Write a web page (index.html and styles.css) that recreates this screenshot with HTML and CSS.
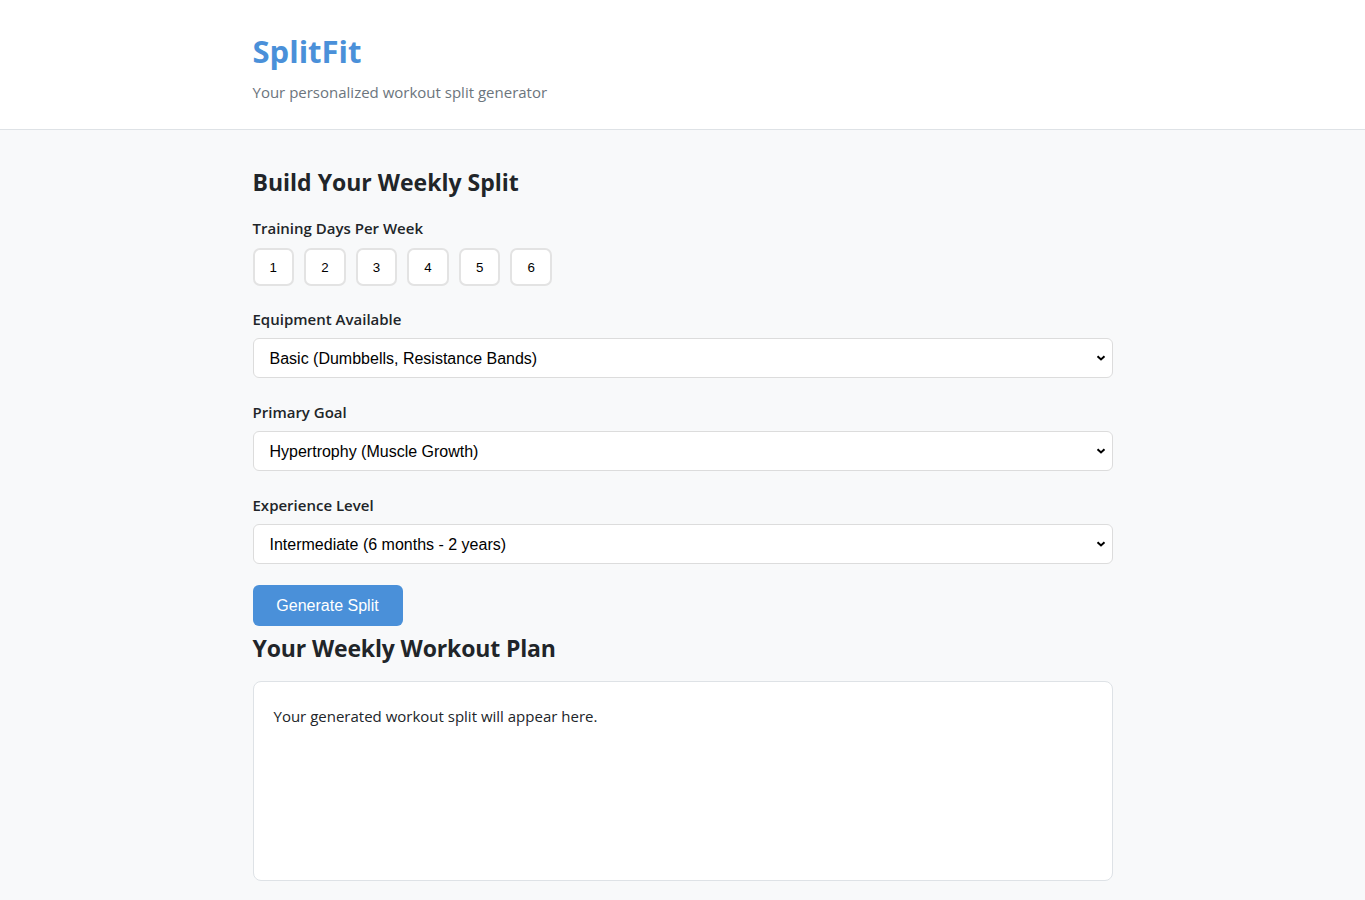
FILE: index.html
```html
<!DOCTYPE html>
<html lang="en">
<head>
<meta charset="utf-8">
<title>SplitFit</title>
<link rel="stylesheet" href="styles.css">
</head>
<body>
<header class="site-header">
  <div class="container">
    <h1 class="logo">SplitFit</h1>
    <p class="tagline">Your personalized workout split generator</p>
  </div>
</header>
<main class="main">
  <div class="container">
    <h2 class="section-title">Build Your Weekly Split</h2>
    <div class="field field-days">
      <label class="field-label days-label">Training Days Per Week</label>
      <div class="days">
        <button class="day-btn">1</button>
        <button class="day-btn">2</button>
        <button class="day-btn">3</button>
        <button class="day-btn">4</button>
        <button class="day-btn">5</button>
        <button class="day-btn">6</button>
      </div>
    </div>
    <div class="field">
      <label class="field-label" for="equipment">Equipment Available</label>
      <select id="equipment" class="select">
        <option>Basic (Dumbbells, Resistance Bands)</option>
      </select>
    </div>
    <div class="field">
      <label class="field-label" for="goal">Primary Goal</label>
      <select id="goal" class="select">
        <option>Hypertrophy (Muscle Growth)</option>
      </select>
    </div>
    <div class="field">
      <label class="field-label" for="exp">Experience Level</label>
      <select id="exp" class="select">
        <option>Intermediate (6 months - 2 years)</option>
      </select>
    </div>
    <button class="generate-btn">Generate Split</button>
    <h2 class="section-title plan-title">Your Weekly Workout Plan</h2>
    <div class="result">
      <p class="result-text">Your generated workout split will appear here.</p>
    </div>
  </div>
</main>
</body>
</html>
```

FILE: styles.css
```css
* { box-sizing: border-box; }
html, body { margin: 0; padding: 0; }
body {
  font-family: "Open Sans", "Noto Sans", sans-serif;
  color: #212529;
  background: #f8f9fa;
}
.container {
  width: 860px;
  margin: 0 auto;
}
.site-header {
  background: #ffffff;
  border-bottom: 1px solid #dee2e6;
  padding: 30px 0 25px;
}
.logo {
  margin: 0;
  font-size: 31px;
  line-height: 42px;
  font-weight: 700;
  color: #4a90d9;
}
.tagline {
  margin: 8px 0 0;
  font-size: 15px;
  line-height: 24px;
  color: #6c757d;
}
.main {
  padding: 36px 0 20px;
}
.section-title {
  margin: 0 0 18px;
  font-size: 23px;
  line-height: 32px;
  font-weight: 700;
  color: #212529;
}
.field {
  margin-bottom: 22px;
}
.field-days {
  margin-bottom: 21px;
}
.field-label {
  display: block;
  font-size: 15px;
  line-height: 24px;
  font-weight: 600;
  margin-bottom: 7px;
}
.days-label {
  margin-bottom: 8px;
}
.days {
  display: flex;
  gap: 10px;
}
.day-btn {
  width: 41.6px;
  height: 38px;
  padding: 0;
  background: #ffffff;
  border: 2px solid #e3e3e3;
  border-radius: 7px;
  font-family: "Liberation Sans", Arial, sans-serif;
  font-size: 13.33px;
  color: #000;
}
.select {
  display: block;
  width: 100%;
  height: 40px;
  padding: 0 30px 0 16px;
  background: #ffffff url("data:image/svg+xml;utf8,<svg xmlns='http://www.w3.org/2000/svg' width='10' height='6' viewBox='0 0 10 6'><path d='M1.5 1.2 L5 4.5 L8.5 1.2' fill='none' stroke='black' stroke-width='2'/></svg>") no-repeat right 6px center;
  border: 1px solid #dcdcdc;
  border-radius: 6px;
  font-family: "Liberation Sans", Arial, sans-serif;
  font-size: 16px;
  color: #000;
  -webkit-appearance: none;
  appearance: none;
}
.generate-btn {
  display: block;
  width: 150px;
  height: 41px;
  margin-top: -1px;
  background: #4a90d9;
  color: #ffffff;
  border: none;
  border-radius: 6px;
  font-family: "Liberation Sans", Arial, sans-serif;
  font-size: 16px;
}
.plan-title {
  margin: 6px 0 17px;
  letter-spacing: -0.15px;
}
.result {
  background: #ffffff;
  border: 1px solid #dee2e6;
  border-radius: 8px;
  padding: 20px;
  min-height: 200px;
}
.result-text {
  margin: 0;
  font-size: 15px;
  line-height: 28px;
}
```
